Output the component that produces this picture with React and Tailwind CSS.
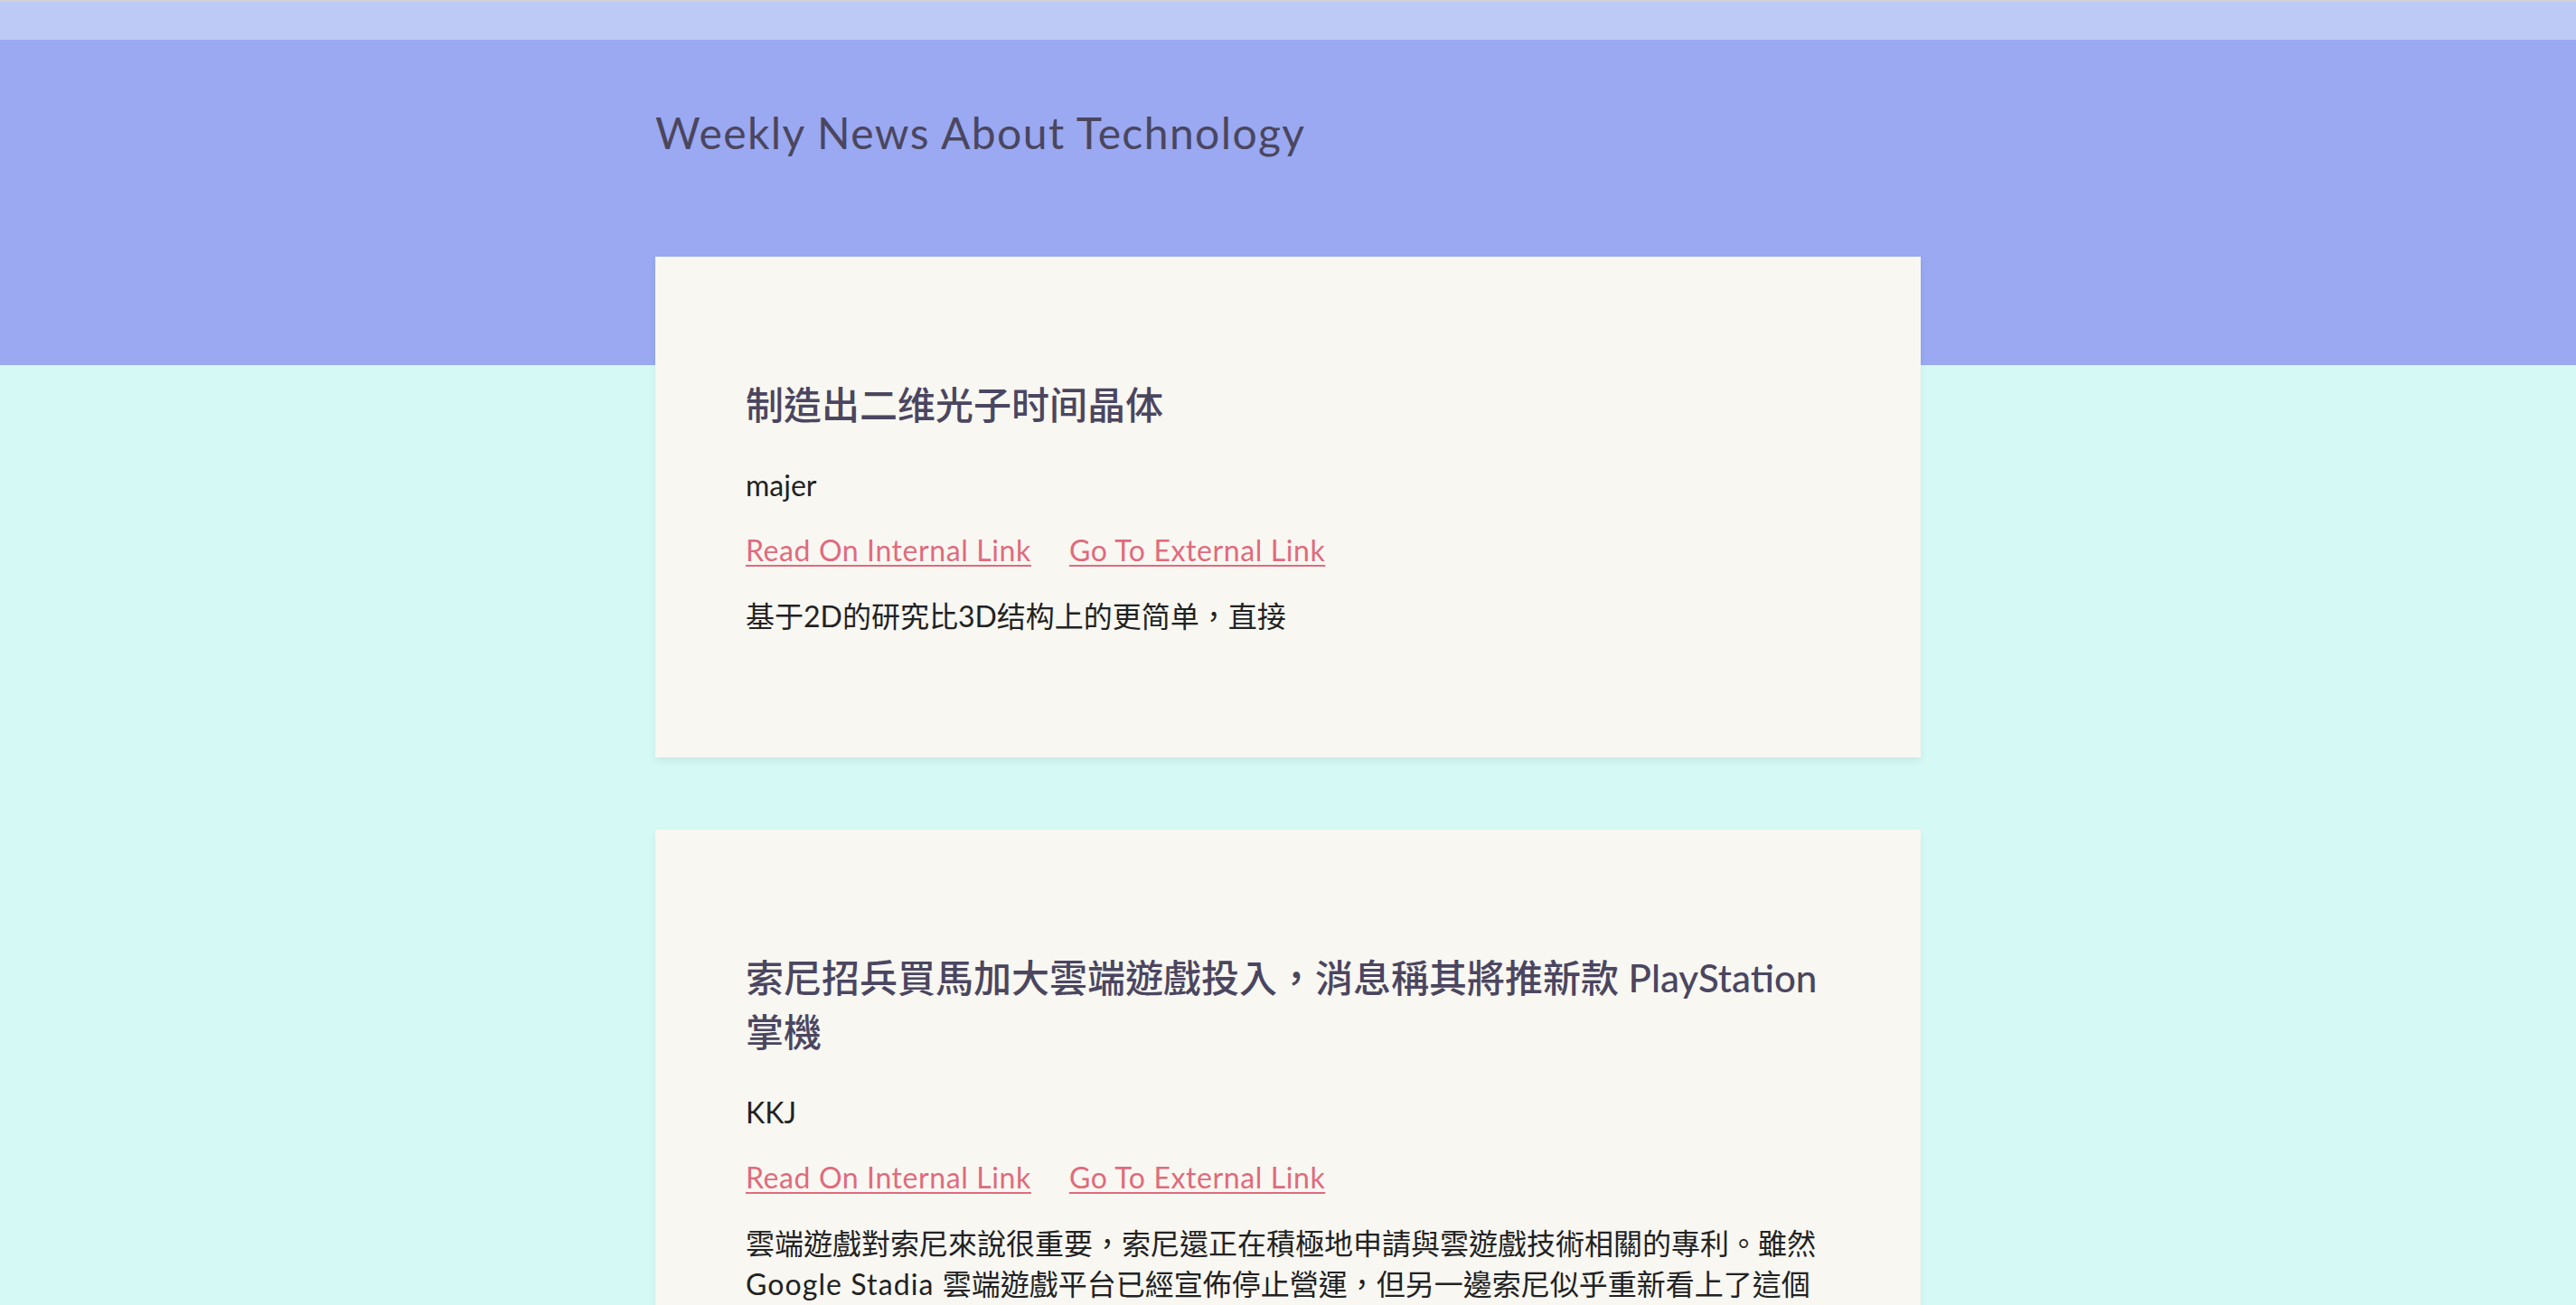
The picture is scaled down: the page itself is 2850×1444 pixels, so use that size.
import React from "react";

const font = { fontFamily: '"Lato", "Noto Sans CJK TC", "Noto Sans CJK SC", sans-serif' };

const posts = [
  {
    title: "制造出二维光子时间晶体",
    author: "majer",
    body: <>基于2D的研究比3D结构上的更简单，直接</>,
  },
  {
    title: "索尼招兵買馬加大雲端遊戲投入，消息稱其將推新款 PlayStation 掌機",
    author: "KKJ",
    body: (
      <>
        雲端遊戲對索尼來說很重要，索尼還正在積極地申請與雲遊戲技術相關的專利。雖然{" "}
        <span className="tracking-[1.1px]">Google Stadia </span>
        雲端遊戲平台已經宣佈停止營運，但另一邊索尼似乎重新看上了這個市場，並計劃推出新的雲端遊戲服務與掌機。
      </>
    ),
  },
];

function Card({ post }) {
  return (
    <article className="bg-[#f8f7f2] px-[100px] py-[134px] shadow-[0_4px_8px_rgba(0,80,80,0.08)]">
      <h2 className="text-[42px] leading-[60px] font-medium text-[#4b4660] mb-[36px]">
        {post.title}
      </h2>
      <p className="text-[32px] leading-[45px] text-[#222] mb-[27px]">{post.author}</p>
      <div className="flex gap-[42px] text-[32px] leading-[45px] tracking-[0.6px] text-[#e06b7c] mb-[28px]">
        <a href="#" className="underline decoration-[2px] underline-offset-[4px]">
          Read On Internal Link
        </a>
        <a href="#" className="underline decoration-[2px] underline-offset-[4px]">
          Go To External Link
        </a>
      </div>
      <p className="text-[32px] leading-[45px] text-[#222]">{post.body}</p>
    </article>
  );
}

export default function App() {
  return (
    <div style={font} className="min-h-screen bg-[#d5f9f5]">
      <div className="h-[2px] bg-[#d2d4d8]" />
      <div className="h-[42px] bg-[#bccaf5]" />
      <header className="h-[360px] bg-[#9aa9f1]">
        <div className="w-[1400px] mx-auto pt-[74px]">
          <h1 className="text-[48px] leading-[58px] tracking-[1.4px] text-[#4b4660]">
            Weekly News About Technology
          </h1>
        </div>
      </header>
      <main className="w-[1400px] mx-auto -mt-[120px] flex flex-col gap-[80px] pb-[80px]">
        {posts.map((p, i) => (
          <Card key={i} post={p} />
        ))}
      </main>
    </div>
  );
}
